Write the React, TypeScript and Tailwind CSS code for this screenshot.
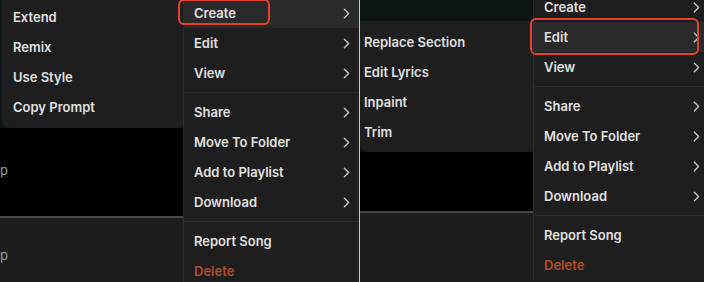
import { ChevronRight } from "lucide-react";

type Item = { label: string; sub?: boolean; danger?: boolean } | "sep";

const mainItems: Item[] = [
  { label: "Create", sub: true },
  { label: "Edit", sub: true },
  { label: "View", sub: true },
  "sep",
  { label: "Share", sub: true },
  { label: "Move To Folder", sub: true },
  { label: "Add to Playlist", sub: true },
  { label: "Download", sub: true },
  "sep",
  { label: "Report Song" },
  { label: "Delete", danger: true },
];

function MainMenu({ active, className }: { active: string; className: string }) {
  return (
    <div className={"absolute w-[176px] bg-[#1e1e1e] border-l border-[#2c2c2c] " + className}>
      {mainItems.map((item, i) =>
        item === "sep" ? (
          <div key={i} className="my-[4px] h-px bg-[#2b2b2b]" />
        ) : (
          <div
            key={i}
            className={
              "flex h-[30px] items-center justify-between pl-[10px] pr-[4px] " +
              (item.label === active ? "bg-[#2a2a2b]" : "")
            }
          >
            <span className={item.danger ? "text-[#b24c2c]" : "text-[#e0e0e0]"}>{item.label}</span>
            {item.sub && <ChevronRight size={17} strokeWidth={2} color="#c2c2c2" />}
          </div>
        )
      )}
    </div>
  );
}

function SubMenu({ items, className }: { items: string[]; className: string }) {
  return (
    <div className={"absolute rounded-b-[8px] bg-[#1e1e1e] " + className}>
      {items.map((label) => (
        <div key={label} className="flex h-[30px] items-center text-[#e0e0e0]">
          {label}
        </div>
      ))}
    </div>
  );
}

export default function App() {
  return (
    <div className="flex h-[282px] w-[704px] overflow-hidden bg-black font-['Inter','Noto_Sans',sans-serif] text-[13px] font-semibold leading-[16px]">
      {/* left shot: Create submenu */}
      <div className="relative h-full w-[359px] shrink-0 overflow-hidden">
        <div className="flex h-full flex-col">
          <div className="h-[128px] bg-[#0f1816]" />
          <div className="flex h-[88px] items-center bg-black pb-[4px] font-normal text-[#9c9c9c]">
            <span>p</span>
          </div>
          <div className="h-[2px] bg-[#474747]" />
          <div className="flex-1 bg-[#1d1d1d] pt-[29px] font-normal text-[#9c9c9c]">
            <span>p</span>
          </div>
        </div>

        <SubMenu
          items={["Extend", "Remix", "Use Style", "Copy Prompt"]}
          className="left-[2px] top-0 h-[128px] w-[184px] pl-[11px] pt-[2px]"
        />
        <MainMenu active="Create" className="left-[183px] top-[-2px]" />
        <div className="absolute left-[178px] top-[-1px] h-[26px] w-[92px] rounded-[6px] border-2 border-[#e6412a]" />
      </div>

      <div className="w-px shrink-0 bg-[#c9c9c9]" />

      {/* right shot: Edit submenu */}
      <div className="relative h-full w-[344px] shrink-0 overflow-hidden">
        <div className="flex h-full flex-col">
          <div className="h-[152px] bg-[#0d1614]" />
          <div className="h-[59px] bg-black" />
          <div className="h-[2px] bg-[#474747]" />
          <div className="flex-1 bg-[#1d1d1d]" />
        </div>

        <SubMenu
          items={["Replace Section", "Edit Lyrics", "Inpaint", "Trim"]}
          className="left-0 top-[21px] h-[131px] w-[177px] pl-[4px] pt-[6px]"
        />
        <MainMenu active="Edit" className="left-[173px] top-[-8px]" />
        <div className="absolute left-[170px] top-[18px] h-[37px] w-[169px] rounded-[6px] border-2 border-[#e6412a]" />
      </div>
    </div>
  );
}
